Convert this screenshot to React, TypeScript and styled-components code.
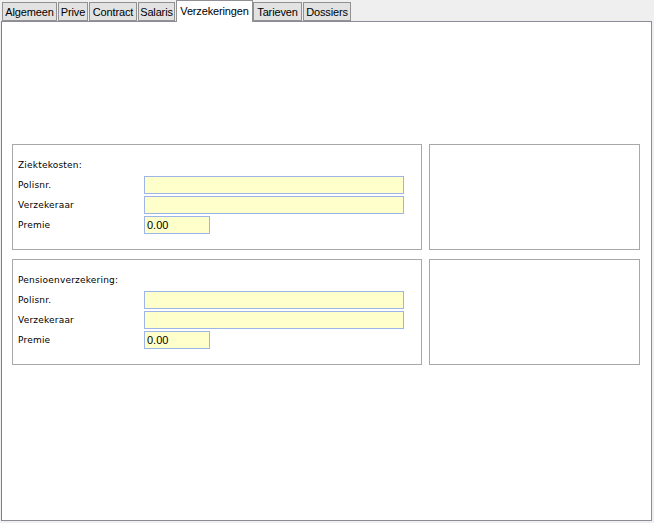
import React from "react";
import styled, { createGlobalStyle } from "styled-components";

const Global = createGlobalStyle`
  html, body { margin: 0; padding: 0; background: #efefef; }
  body { font-family: "Liberation Sans", Arial, sans-serif; }
  * { box-sizing: border-box; }
`;

const Page = styled.div`
  width: 654px;
  height: 523px;
  display: flex;
  flex-direction: column;
  background: #efefef;
`;

const TabBar = styled.div`
  height: 22px;
  display: flex;
  align-items: flex-end;
  padding-left: 2px;
  margin-bottom: -1px;
  position: relative;
  z-index: 1;
`;

const Tab = styled.div<{ $active?: boolean; $w: number }>`
  width: ${(p) => p.$w}px;
  height: ${(p) => (p.$active ? "22px" : "19px")};
  margin-bottom: ${(p) => (p.$active ? "0" : "1px")};
  padding-top: ${(p) => (p.$active ? "2px" : "1px")};
  margin-right: ${(p) => (p.$active ? "0" : "1px")};
  background: ${(p) => (p.$active ? "#ffffff" : "#e2e2e2")};
  border: 1px solid #919191;
  border-bottom: ${(p) => (p.$active ? "none" : "1px solid #919191")};
  font-size: 11px;
  letter-spacing: -0.15px;
  line-height: 16px;
  text-align: center;
  color: #000;
  white-space: nowrap;
  overflow: hidden;
`;

const Panel = styled.div`
  margin-left: 1px;
  width: 651px;
  height: 500px;
  background: #ffffff;
  border: 1px solid #8c8c98;
  border-left-color: #80808c;
  padding: 122px 10px 0 10px;
  display: flex;
  flex-direction: column;
  gap: 9px;
`;

const Row = styled.div`
  display: flex;
  gap: 7px;
`;

const GroupBox = styled.div<{ $w: number }>`
  width: ${(p) => p.$w}px;
  height: 106px;
  border: 1px solid #a8a8a8;
  padding: 11px 0 0 5px;
  display: flex;
  flex-direction: column;
  gap: 2px;
`;

const FieldRow = styled.div`
  display: flex;
  align-items: center;
  height: 18px;
`;

const Label = styled.div`
  width: 126px;
  font-family: "DejaVu Sans", "Liberation Sans", sans-serif;
  font-size: 9px;
  letter-spacing: 0.2px;
  color: #000;
  white-space: nowrap;
`;

const Input = styled.div<{ $w: number }>`
  width: ${(p) => p.$w}px;
  height: 18px;
  border: 1px solid #9db4e6;
  background: #ffffcc;
  font-size: 11px;
  line-height: 16px;
  padding-left: 2px;
  color: #000;
`;

const tabs: [string, number][] = [
  ["Algemeen", 55],
  ["Prive", 30],
  ["Contract", 48],
  ["Salaris", 37],
  ["Verzekeringen", 77],
  ["Tarieven", 49],
  ["Dossiers", 48],
];

function Group({ title }: { title: string }) {
  return (
    <GroupBox $w={410}>
      <FieldRow>
        <Label>{title}</Label>
      </FieldRow>
      <FieldRow>
        <Label>Polisnr.</Label>
        <Input $w={260} />
      </FieldRow>
      <FieldRow>
        <Label>Verzekeraar</Label>
        <Input $w={260} />
      </FieldRow>
      <FieldRow>
        <Label>Premie</Label>
        <Input $w={66}>0.00</Input>
      </FieldRow>
    </GroupBox>
  );
}

export default function App() {
  return (
    <Page>
      <Global />
      <TabBar>
        {tabs.map(([t, w]) => (
          <Tab key={t} $w={w} $active={t === "Verzekeringen"}>
            {t}
          </Tab>
        ))}
      </TabBar>
      <Panel>
        <Row>
          <Group title="Ziektekosten:" />
          <GroupBox $w={211} />
        </Row>
        <Row>
          <Group title="Pensioenverzekering:" />
          <GroupBox $w={211} />
        </Row>
      </Panel>
    </Page>
  );
}
